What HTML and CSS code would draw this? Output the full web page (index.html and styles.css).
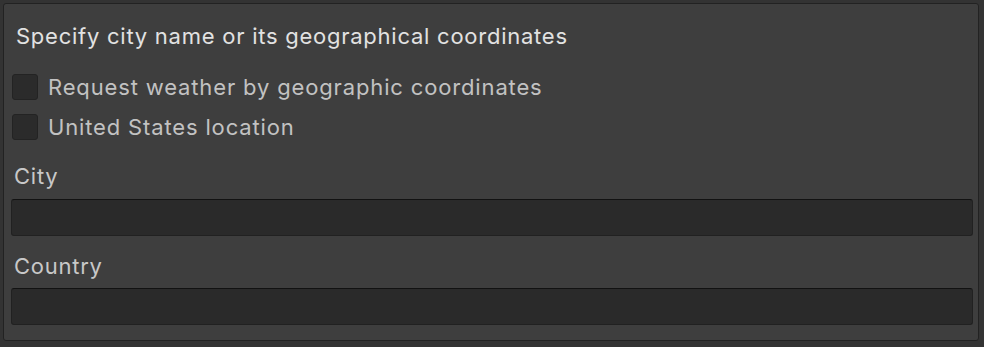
FILE: index.html
```html
<!DOCTYPE html>
<html>
<head>
<meta charset="utf-8">
<link rel="stylesheet" href="styles.css">
</head>
<body>
<div class="panel">
  <div class="title">Specify city name or its geographical coordinates</div>
  <div class="checks">
    <label class="check"><span class="box"></span><span class="check-text">Request weather by geographic coordinates</span></label>
    <label class="check"><span class="box"></span><span class="check-text">United States location</span></label>
  </div>
  <div class="field field-city">
    <div class="field-label">City</div>
    <div class="input"></div>
  </div>
  <div class="field field-country">
    <div class="field-label">Country</div>
    <div class="input"></div>
  </div>
</div>
</body>
</html>
```
FILE: styles.css
```css
html, body {
  margin: 0;
  padding: 0;
  background: #333333;
  width: 984px;
  height: 347px;
  overflow: hidden;
}
body {
  font-family: Inter, "Noto Sans", sans-serif;
  font-size: 22px;
  line-height: 26px;
  letter-spacing: 0.75px;
}
.panel {
  box-sizing: border-box;
  margin: 3px 0 0 3px;
  width: 976px;
  height: 338px;
  background: #3e3e3e;
  border: 1px solid #222222;
  border-radius: 3px;
  padding: 19px 5px 0 7px;
  display: flex;
  flex-direction: column;
}
.title {
  color: #e2e2e2;
  padding-left: 5px;
}
.checks {
  margin-top: 24px;
  display: flex;
  flex-direction: column;
  gap: 13px;
}
.check {
  display: flex;
  align-items: center;
  height: 27px;
  padding-left: 1px;
}
.box {
  box-sizing: border-box;
  width: 26px;
  height: 26px;
  background: #2b2b2b;
  border: 1px solid #232323;
  border-radius: 3px;
  flex: none;
}
.check-text {
  color: #c2c2c2;
  margin-left: 10px;
  letter-spacing: 0.85px;
}
.field {
  display: flex;
  flex-direction: column;
}
.field-city {
  margin-top: 23px;
}
.field-country {
  margin-top: 17px;
}
.field-label {
  color: #c8c8c8;
  padding-left: 3px;
  margin-bottom: 10px;
}
.field-country .field-label {
  margin-bottom: 9px;
}
.input {
  box-sizing: border-box;
  height: 37px;
  background: #2a2a2a;
  border: 1px solid #212121;
  border-top-color: #121212;
  border-radius: 3px;
}
```
